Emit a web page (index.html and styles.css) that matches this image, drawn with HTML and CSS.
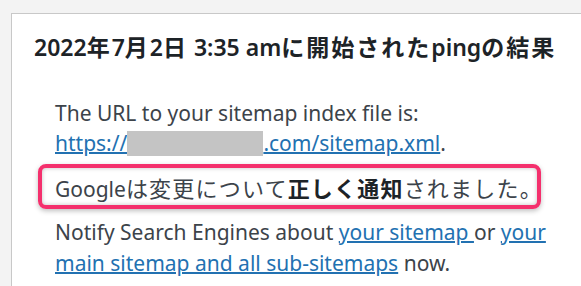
FILE: index.html
```html
<!DOCTYPE html>
<html lang="ja">
<head>
  <meta charset="UTF-8">
  <title>Ping result</title>
  <link rel="stylesheet" href="styles.css">
</head>
<body>
  <div class="card">
    <h2>2022<span class="ja">年</span>7<span class="ja">月</span>2<span class="ja">日</span> 3:35 am<span class="ja">に開始された</span>ping<span class="ja">の結果</span></h2>

    <div class="content">
      <p>The URL to your sitemap index file is:<br>
        <a href="#">https://<span class="masked"></span>.com/sitemap.xml</a>.</p>

      <!-- highlighted result -->
      <p class="notice">Google<span class="ja">は変更について<strong>正しく通知</strong>されました。</span></p>

      <p class="notify">Notify Search Engines about <a href="#">your sitemap </a> or <a href="#">your main sitemap and all sub-sitemaps</a> now.</p>
    </div>
  </div>
</body>
</html>
```

FILE: styles.css
```css
body {
  margin: 0;
  padding: 13px 0 0 11px;
  background-color: #f3f3f3;
  font-family: "Noto Sans", "Noto Sans CJK JP", sans-serif;
  color: #3c434a;
  overflow: hidden;
}

.card {
  width: 620px;
  height: 320px;
  background-color: white;
  border: 1px solid #c8c8c8;
  padding: 0 0 0 22px;
}

h2 {
  margin: 0;
  padding-top: 18px;
  font-size: 23px;
  font-weight: 600;
  line-height: 30px;
  color: #1d2327;
}

h2 .ja {
  letter-spacing: 2px;
}

.content {
  padding: 36px 0 0 21px;
  width: 505px;
}

p {
  margin: 0;
  font-size: 21px;
  line-height: 30px;
}

.notify {
  line-height: 31px;
}

a {
  color: #2271b1;
  text-decoration: underline;
  text-decoration-thickness: 2px;
}

.masked {
  display: inline-block;
  width: 136px;
  height: 25px;
  vertical-align: -5px;
  background-color: #c4c4c4;
}

.notice {
  width: 469px;
  margin: 6px 0 8px -17px;
  padding: 5px 13px 1px;
  border: 4px solid #f4306d;
  border-radius: 8px;
  white-space: nowrap;
  box-shadow: 0 2px 5px rgba(0, 0, 0, 0.25), inset 0 0 4px rgba(0, 0, 0, 0.25);
}

.notice .ja {
  font-size: 22px;
  letter-spacing: 1.2px;
}

.notice strong {
  color: #1d2327;
}
```
